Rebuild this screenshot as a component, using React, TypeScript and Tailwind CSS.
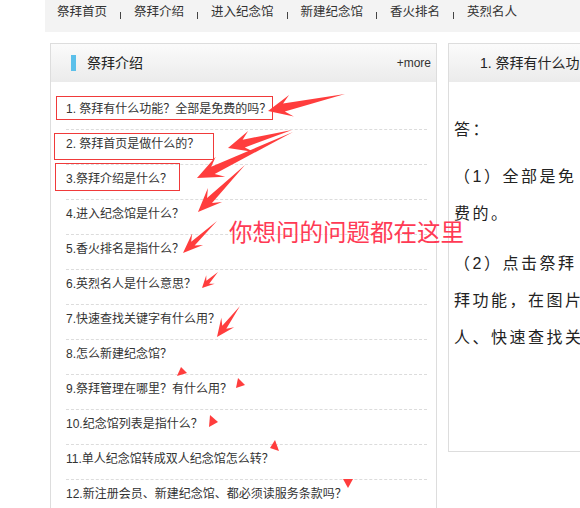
// Q&A page: nav, question list, answer panel, plus red annotation layer
const font = "font-['Liberation_Sans','Noto_Sans_CJK_SC',sans-serif]";

const navItems = ["祭拜首页", "祭拜介绍", "进入纪念馆", "新建纪念馆", "香火排名", "英烈名人"];

const questions = [
	"1. 祭拜有什么功能？全部是免费的吗？",
	"2. 祭拜首页是做什么的？",
	"3.祭拜介绍是什么？",
	"4.进入纪念馆是什么？",
	"5.香火排名是指什么？",
	"6.英烈名人是什么意思？",
	"7.快速查找关键字有什么用？",
	"8.怎么新建纪念馆？",
	"9.祭拜管理在哪里？有什么用？",
	"10.纪念馆列表是指什么？",
	"11.单人纪念馆转成双人纪念馆怎么转？",
	"12.新注册会员、新建纪念馆、都必须读服务条款吗？",
];

type Pt = [number, number];

// tapered arrow: thin at the tail, swept-back head at the tip
const arrowPoints = (t: Pt, p: Pt, hl: number, hw: number, sw: number) => {
	const dx = t[0] - p[0];
	const dy = t[1] - p[1];
	const len = Math.hypot(dx, dy);
	const ux = dx / len;
	const uy = dy / len;
	const nx = -uy;
	const ny = ux;
	const bx = p[0] + ux * hl;
	const by = p[1] + uy * hl;
	const kx = p[0] + ux * hl * 0.68;
	const ky = p[1] + uy * hl * 0.68;
	const pts: Pt[] = [
		p,
		[bx + (nx * hw) / 2, by + (ny * hw) / 2],
		[kx + (nx * sw) / 2, ky + (ny * sw) / 2],
		t,
		[kx - (nx * sw) / 2, ky - (ny * sw) / 2],
		[bx - (nx * hw) / 2, by - (ny * hw) / 2],
	];
	return pts.map((q) => q.join(",")).join(" ");
};

const arrows: [Pt, Pt, number, number, number][] = [
	[[345, 94], [268, 111], 24, 22, 8],
	[[292, 130], [228, 148], 24, 22, 8],
	[[293, 132], [197, 178], 26, 22, 8],
	[[245, 165], [198, 212], 24, 20, 7],
	[[217, 221], [183, 253], 20, 16, 5],
	[[218, 272], [202, 288], 12, 12, 4],
	[[240, 306], [217, 337], 18, 16, 5],
];

const heads = [
	"177,376 181,367 187,373",
	"236,388 238,378 245,385",
	"210,415 218,422 209,427",
	"275,440 279,451 270,448",
	"343,479 353,479 348,488",
];

const Annotations = () => (
	<>
		<svg className="absolute inset-0 pointer-events-none" width={580} height={508}>
			<rect x={56.5} y={96.5} width={216} height={23} fill="none" stroke="#f03a3a" />
			<rect x={54.5} y={133.5} width={159} height={26} fill="none" stroke="#f03a3a" />
			<rect x={55.5} y={163.5} width={124} height={27} fill="none" stroke="#f03a3a" />
			{arrows.map(([t, p, hl, hw, sw], i) => (
				<polygon key={i} points={arrowPoints(t, p, hl, hw, sw)} fill="#ff3d3d" />
			))}
			{heads.map((h, i) => (
				<polygon key={i} points={h} fill="#ff3d3d" />
			))}
		</svg>
		<div className="absolute left-[229px] top-[218px] text-[23.5px] leading-[30px] text-[#ff3a55] whitespace-nowrap">
			你想问的问题都在这里
		</div>
	</>
);

const App = () => {
	return (
		<div className={`relative w-[580px] h-[508px] overflow-hidden bg-white text-[#333] ${font}`}>
			{/* === Nav === */}
			<div className="ml-[45px] h-[32px] bg-[#f3f3f3] pl-[12px] pt-[3px] flex items-start gap-[13px] text-[12.5px] leading-[18px] whitespace-nowrap">
				{navItems.map((item, i) => (
					<div key={item} className="flex items-start gap-[13px]">
						{i > 0 && <span className="mt-[9px] w-px h-[7px] bg-[#444]" />}
						<span>{item}</span>
					</div>
				))}
			</div>

			{/* === Panels === */}
			<div className="mt-[11px] flex items-start gap-[11px]">
				<div className="ml-[50px] w-[387px] h-[480px] shrink-0 border border-[#dddddd]">
					<div className="h-[38px] bg-gradient-to-b from-[#fbfbfb] to-[#ebebeb] flex items-center pl-[20px] pr-[5px]">
						<span className="w-[5px] h-[16px] bg-[#5bc0ea]" />
						<span className="ml-[11px] text-[14px] text-[#222]">祭拜介绍</span>
						<span className="ml-auto text-[12px]">+more</span>
					</div>
					<ul className="pt-[13px] pl-[15px] pr-[9px]">
						{questions.map((q) => (
							<li
								key={q}
								className="h-[35px] border-b border-dashed border-[#dcdcdc] text-[12px] leading-[28px] whitespace-nowrap"
							>
								{q}
							</li>
						))}
					</ul>
				</div>

				<div className="w-[320px] h-[409px] shrink-0 border border-[#dddddd]">
					<div className="h-[38px] bg-gradient-to-b from-[#fbfbfb] to-[#ebebeb] flex items-center pl-[31px] text-[14px] text-[#222] whitespace-nowrap">
						1. 祭拜有什么功能？全部是免费的吗？
					</div>
					<div className="pt-[29px] pl-[5px] text-[16px] leading-[37px] tracking-[2.5px] text-[#222] whitespace-nowrap">
						<p>答：</p>
						<p className="mt-[10px]">（1）全部是免</p>
						<p>费的。</p>
						<p className="mt-[13px]">（2）点击祭拜</p>
						<p>拜功能，在图片上</p>
						<p>人、快速查找关键字</p>
					</div>
				</div>
			</div>

			<Annotations />
		</div>
	);
};

export default App;
